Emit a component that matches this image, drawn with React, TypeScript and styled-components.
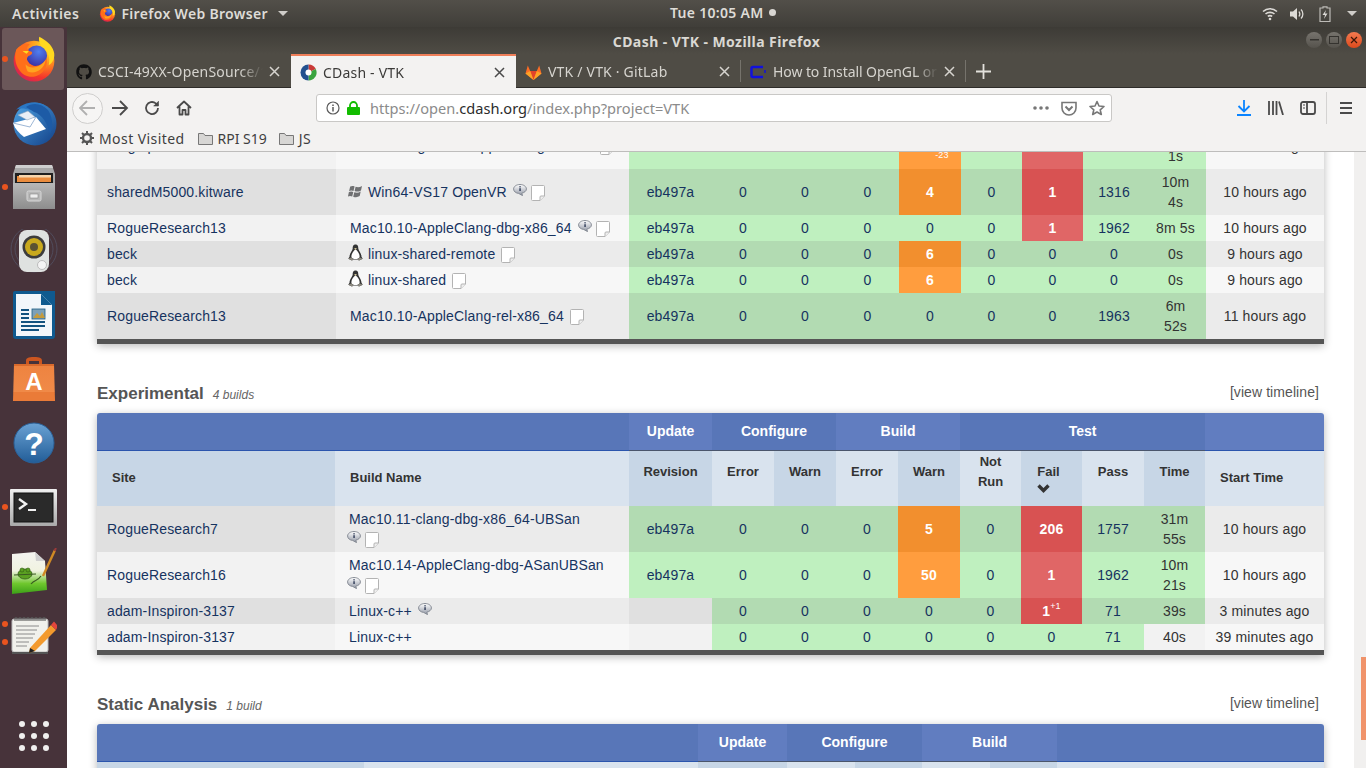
import React from "react";
import styled, { createGlobalStyle } from "styled-components";
import { FaGithub } from "react-icons/fa";

const Global = createGlobalStyle`
  html, body { margin: 0; padding: 0; background: #fff; overflow: hidden; }
  #root { width: 1366px; height: 768px; }
`;

const UI = `"Noto Sans", "Open Sans", sans-serif`;
const WEB = `"Liberation Sans", Arial, sans-serif`;

const Root = styled.div`
  width: 1366px; height: 768px; overflow: hidden; display: flex; flex-direction: column;
  font-family: ${UI};
`;

/* ---------- top panel ---------- */
const Panel = styled.header`
  height: 27px; flex: none; display: flex; align-items: center; position: relative;
  background: linear-gradient(#524f49, #403e39);
  color: #dedcd7; font-size: 14px; font-weight: 600; padding: 0 4px 0 12px; box-sizing: border-box;
`;
const PanelItem = styled.span`
  display: inline-flex; align-items: center; white-space: nowrap; letter-spacing: 0.5px;
`;
const AppMenu = styled(PanelItem)`
  margin-left: 20px; gap: 5px; letter-spacing: 0.32px;
`;
const Caret = styled.i`
  display: inline-block; width: 0; height: 0; margin-left: 5px;
  border-left: 5px solid transparent; border-right: 5px solid transparent; border-top: 5px solid #cfcdc9;
`;
const Clock = styled(PanelItem)`
  position: absolute; left: 670px; top: 3px; gap: 5px; letter-spacing: 0.3px;
`;
const RecDot = styled.i`
  width: 7px; height: 7px; border-radius: 50%; background: #d8d6d2;
`;
const Status = styled.div`
  margin-left: auto; display: flex; align-items: center; gap: 11px; padding-right: 5px;
`;

/* ---------- layout ---------- */
const Body = styled.div`
  flex: 1; display: flex; min-height: 0;
`;
const Dock = styled.nav`
  width: 67px; flex: none; background: #47333a; display: flex; flex-direction: column;
`;
const DockItem = styled.div<{ $active?: boolean }>`
  height: 64px; flex: none; display: flex; align-items: center; justify-content: center; position: relative;
  ${p => p.$active ? `
    &::before { content: ""; position: absolute; left: 2px; right: 3px; top: 1px; bottom: 1px;
      background: #6b5759; border-radius: 3px; }
  ` : ""}
  & > svg { position: relative; }
`;
const DockBottom = styled(DockItem)`
  margin-top: auto;
`;
const Pip = styled.i<{ $top: number }>`
  position: absolute; left: 2px; top: ${p => p.$top}px; width: 6px; height: 6px; border-radius: 50%; background: #e9541f;
`;
const Main = styled.div`
  flex: 1; min-width: 0; display: flex; flex-direction: column;
`;
const TitleBar = styled.div`
  height: 27px; flex: none; display: flex; align-items: center; justify-content: center; position: relative;
  background: linear-gradient(#3d3b36, #4f4c45); padding-top: 1px;
  color: #dad8d3; font-size: 14px; font-weight: 700; letter-spacing: 0.42px; box-sizing: border-box;
`;
const WinButtons = styled.div`
  position: absolute; right: 4px; top: 5px; display: flex; gap: 4px;
`;
const WinButton = styled.span<{ $close?: boolean }>`
  width: 16px; height: 16px; border-radius: 50%; display: flex; align-items: center; justify-content: center;
  background: ${p => p.$close ? "linear-gradient(#f47a50,#dc4a1c)" : "linear-gradient(#77746e,#55524c)"};
`;
const Tabs = styled.div`
  height: 33px; flex: none; display: flex; background: #4f4c45; border-bottom: 1px solid #2e2c29; box-sizing: content-box;
`;
const Tab = styled.div<{ $active?: boolean; $w: number; $sep?: boolean }>`
  width: ${p => p.$w}px; flex: none; box-sizing: border-box; display: flex; align-items: center; gap: 6px;
  padding: 2px 9px 0 9px; font-size: 14px; position: relative; letter-spacing: 0.2px;
  color: ${p => p.$active ? "#3b3a38" : "#d6d4cf"};
  ${p => p.$active ? `background: #f3f2f1; border-top: 2px solid #ef7f5a; margin-bottom: -1px; padding-top: 0; padding-bottom: 0;` : ""}
  ${p => p.$sep ? `&::after { content: ""; position: absolute; right: 0; top: 6px; bottom: 5px; width: 1px; background: #76736c; }` : ""}
`;
const TabLabel = styled.span<{ $track?: number }>`
  flex: 1; min-width: 0; white-space: nowrap; overflow: hidden;
  letter-spacing: ${p => p.$track ?? 0.2}px;
  -webkit-mask-image: linear-gradient(to right, #000 86%, transparent);
  mask-image: linear-gradient(to right, #000 86%, transparent);
`;
const Plus = styled.div`
  width: 34px; display: flex; align-items: center; justify-content: center; padding-top: 2px;
`;
const Toolbar = styled.div`
  height: 37px; flex: none; background: #f3f2f1; display: flex; align-items: center; position: relative;
  padding: 3px 0 0 5px; box-sizing: border-box;
`;
const BackButton = styled.span`
  width: 31px; height: 31px; box-sizing: border-box; border: 1px solid #cfcecd; border-radius: 50%; margin-right: 1px;
  display: flex; align-items: center; justify-content: center; background: #f6f5f4;
`;
const ToolIcon = styled.span<{ $w?: number }>`
  width: ${p => p.$w ?? 32}px; display: flex; align-items: center; justify-content: center; flex: none;
`;
const UrlBar = styled.div`
  width: 796px; height: 28px; box-sizing: border-box; margin: 0 116px; flex: none;
  background: #fff; border: 1px solid #c9c8c6; border-radius: 3px; display: flex; align-items: center; padding: 0 6px 0 9px;
`;
const UrlText = styled.span`
  color: #8b8b8b; font-size: 14.6px; margin-left: 10px; white-space: nowrap; flex: 1;
  & b { color: #2c2c2c; font-weight: 400; }
`;
const ToolSep = styled.i`
  width: 1px; height: 32px; background: #d4d3d2; margin: 0 3px 0 2px;
`;
const Bookmarks = styled.div`
  height: 26px; flex: none; background: #f3f2f1; border-bottom: 1px solid #bebdbc; box-sizing: content-box;
  display: flex; align-items: center; padding-left: 13px; color: #3f3f3f; font-size: 14px;
`;
const Bookmark = styled.span<{ $gap?: number; $track?: number }>`
  display: inline-flex; align-items: center; gap: 5px; margin-right: ${p => p.$gap ?? 0}px; white-space: nowrap;
  letter-spacing: ${p => p.$track ?? 0}px;
`;

/* ---------- page ---------- */
const Page = styled.main`
  flex: 1; min-height: 0; display: flex; background: #fff; overflow: hidden; font-family: ${WEB}; font-size: 14px;
`;
const Content = styled.div`
  width: 1287px; flex: none; box-sizing: border-box; padding: 0 30px;
`;
const Track = styled.div`
  width: 12px; flex: none; background: #f1f0ef;
`;
const Thumb = styled.div`
  width: 5px; height: 83px; margin: 505px 0 0 7px; background: #f0936a;
`;
const SectionHead = styled.div`
  height: 24px; margin: 37px 0 8px; display: flex; align-items: center; color: #555;
`;
const SectionTitle = styled.span`
  font-size: 17px; font-weight: 700; color: #555; position: relative; top: 1px;
`;
const Count = styled.em`
  font-size: 12px; color: #666; margin-left: 9px; position: relative; top: 2px;
`;
const Timeline = styled.span`
  margin-left: auto; margin-right: 5px; color: #555; position: relative; top: -1px; letter-spacing: 0.08px;
`;
const TableWrap = styled.div<{ $clip?: boolean }>`
  width: 1227px; box-shadow: 0 2px 9px rgba(0,0,0,.28);
  border-radius: 3px 3px 0 0; overflow: hidden;
  ${p => p.$clip ? `margin-top: -29px;` : ""}
`;
const Table = styled.table`
  width: 1227px; table-layout: fixed; border-collapse: collapse; border-bottom: 5px solid #555;
`;
const Col = styled.col<{ $w: number }>`
  width: ${p => p.$w}px;
`;
const TopTh = styled.th<{ $light?: boolean; $group?: boolean }>`
  height: 37px; padding: 0; box-sizing: border-box; color: #fff; font-size: 14px; font-weight: 700;
  background: ${p => p.$light ? "#617dc0" : "#5876b8"};
  border-bottom: 1px solid ${p => p.$group ? "#4b566c" : "#2b55ad"};
`;
const SubTh = styled.th<{ $light?: boolean; $left?: boolean; $raised?: boolean }>`
  height: 56px; box-sizing: border-box; color: #333; font-size: 13px; font-weight: 700; line-height: 20px;
  background: ${p => p.$light ? "#d9e3ee" : "#c7d6e6"};
  text-align: ${p => p.$left ? "left" : "center"};
  padding: ${p => p.$raised ? "0 4px 13px" : p.$left ? "0 0 0 15px" : "0 4px"};
`;
const SortHead = styled.span`
  display: inline-block; text-align: left; margin-right: 6px;
`;
const Chevron = styled.svg`
  display: block;
`;
const Row = styled.tr`
  height: 26px;
`;
const Td = styled.td<{ $bg: string; $hot?: boolean; $plain?: boolean }>`
  background: ${p => p.$bg}; padding: 3px 10px; box-sizing: border-box; line-height: 20px; text-align: center;
  letter-spacing: 0.15px;
  color: ${p => p.$hot ? "#fff" : p.$plain ? "#333" : "#16335f"};
  font-weight: ${p => p.$hot ? 700 : 400};
`;
const SiteTd = styled(Td)`
  text-align: left; white-space: nowrap; overflow: hidden;
`;
const BuildTd = styled(Td)`
  text-align: left; padding-left: 14px; padding-right: 4px; white-space: nowrap; overflow: hidden;
`;
const Delta = styled.sup`
  font-size: 9px; line-height: 0; font-weight: 400; position: relative; vertical-align: 0; top: -7px;
`;
const DeltaDown = styled(Delta)`
  top: 7px; margin-left: 0;
`;
const OsIcon = styled.svg`
  margin: 0 5px 0 -2px; vertical-align: -2px;
`;
const NoteIcon = styled.svg<{ $first?: boolean }>`
  margin-left: ${p => p.$first ? -2 : 6}px; margin-right: -2px; vertical-align: 1px;
`;
const DocIcon = styled.svg`
  margin-left: 6px; vertical-align: -4px;
`;

/* ---------- small drawings ---------- */
const Note = ({ first }: { first?: boolean }) => (
  <NoteIcon $first={first} width="14" height="12" viewBox="0 0 14 12">
    <defs><linearGradient id="nt" x1="0" y1="0" x2="0" y2="1"><stop offset="0" stopColor="#fff"/><stop offset="1" stopColor="#8f95a3"/></linearGradient></defs>
    <path d="M7 .5C3.4.5.6 2.5.6 5S3 9.2 5.6 9.4L9.5 11.6 8.8 9.2C11.4 8.6 13.4 7 13.4 5 13.4 2.5 10.6.5 7 .5Z" fill="url(#nt)" stroke="#7d828c" strokeWidth=".9"/>
    <rect x="6.4" y="2.200" width="1.300" height="1.200" fill="#1f2c4a"/><rect x="6.4" y="4.200" width="1.300" height="2.800" fill="#1f2c4a"/>
  </NoteIcon>
);
const Doc = () => (
  <DocIcon width="14" height="16" viewBox="0 0 14 16">
    <path d="M1.500.5H12.500A1 1 0 0 1 13.500 1.500V11L9 15.500H1.500A1 1 0 0 1 .5 14.500V1.500A1 1 0 0 1 1.500.5Z" fill="#fff" stroke="#b3b3b3"/>
    <path d="M13.500 11H10A1 1 0 0 0 9 12V15.500" fill="#eee" stroke="#b3b3b3"/>
  </DocIcon>
);
const Penguin = () => (
  <OsIcon width="15" height="17" viewBox="0 0 15 17">
    <path d="M7.500.5C5 .5 4.700 2.800 4.700 4.400 4.700 6.200 1.500 9 1.500 12.800L.3 14.800 4 16.500 5.300 15.600H9.700L11 16.500 14.700 14.800 13.500 12.800C13.500 9 10.300 6.200 10.300 4.400 10.300 2.800 10 .5 7.500.5Z" fill="#333"/>
    <path d="M7.500 5.600C5.400 6.800 3.200 10 3.400 12.800 3.600 14.800 5.700 15 7.500 15S11.400 14.800 11.600 12.800C11.800 10 9.600 6.800 7.500 5.600Z" fill="#fff"/>
    <path d="M6 4.800 7.500 4 9 4.800 7.500 5.800Z" fill="#e3d7a6"/>
    <path d="M.3 14.800 3.500 13.300 5.300 15.600 4 16.500ZM14.700 14.800 11.500 13.300 9.700 15.600 11 16.500Z" fill="#8d8a80"/>
  </OsIcon>
);
const WinFlag = () => (
  <OsIcon width="15" height="14" viewBox="0 0 15 14">
    <g fill="#6f7072">
      <path d="M2.200 1.600C3.800.7 5 .8 6.600 1.400L5.500 5.900C4 5.300 2.700 5.200 1.100 6Z"/>
      <path d="M7.600 1.700C9.600 2.500 11.600 2.400 14 .9L13 5.400C10.800 6.800 8.600 6.900 6.600 6.100Z"/>
      <path d="M.9 7C2.400 6.200 3.800 6.200 5.300 6.900L4.200 11.500C2.700 10.900 1.300 10.800-.1 11.600Z"/>
      <path d="M6.300 7.200C8.400 8 10.600 7.900 12.700 6.500L11.700 11.100C9.600 12.500 7.400 12.500 5.200 11.700Z"/>
    </g>
  </OsIcon>
);

const FirefoxGrad = () => (
  <defs>
    <radialGradient id="ffo" cx=".8" cy=".15" r="1.050"><stop offset="0" stopColor="#ffe226"/><stop offset=".35" stopColor="#ff9a1f"/><stop offset=".72" stopColor="#f5352b"/><stop offset="1" stopColor="#c81f62"/></radialGradient>
    <radialGradient id="ffp" cx=".6" cy=".3" r=".8"><stop offset="0" stopColor="#4f7ff0"/><stop offset="1" stopColor="#3a2a9c"/></radialGradient>
  </defs>
);
const Firefox = ({ size }: { size: number }) => (
  <svg width={size} height={size} viewBox="0 0 44 44">
    <FirefoxGrad/>
    <circle cx="22" cy="24" r="19.500" fill="url(#ffo)"/>
    <circle cx="24.500" cy="19" r="10" fill="url(#ffp)"/>
    <path d="M27 .8C26 5 28 9 31 11 35 14 38 21 36 28 40 26 42.500 20 41 15 39 8 33 4 27 .8Z" fill="#ffd91f"/>
    <path d="M5 13C8 9 13 7 18 8 14 11 15 13 18 14.500 22 15 20 18 17 19 14 21 15 26 20 28 25 30 31 27 34 21 36 31 28 40 18 39 9 38 1 26 5 13Z" fill="#ff6f1a"/>
    <path d="M14 27C18 32 28 31 33 23 32 32 23 37 16 34 15 32 14 30 14 27Z" fill="#ffa41f"/>
    <path d="M11 14C13 15 15 14 17 14.500L15 17C14 16 12 15.500 11 14Z" fill="#ffd91f"/>
  </svg>
);
const Thunderbird = () => (
  <svg width="48" height="46" viewBox="0 0 48 46">
    <defs><linearGradient id="tb" x1="0" y1="0" x2="1" y2="1"><stop offset="0" stopColor="#4fa6e6"/><stop offset="1" stopColor="#123f86"/></linearGradient></defs>
    <circle cx="25" cy="24" r="21.500" fill="url(#tb)"/>
    <path d="M6 10C14 1 30 0 38 8 30 5 24 6 20 10 14 8 10 8 6 10Z" fill="#2a77c4"/>
    <path d="M16 7C22 2 32 3 38 10 42 16 44 26 40 34 38 24 32 14 24 12Z" fill="#1d5ba6"/>
    <path d="M3 23 26 17 36 29 14 37C9 33 5 29 3 23Z" fill="#fff"/>
    <path d="M3 23 20 27 26 17" fill="none" stroke="#9db7d6"/>
    <path d="M8 15 18 11 25 17 17 20Z" fill="#e8eef6" stroke="#93a7bf" strokeWidth=".6"/>
  </svg>
);
const Cabinet = () => (
  <svg width="42" height="44" viewBox="0 0 42 44">
    <defs><linearGradient id="cb" x1="0" y1="0" x2="0" y2="1"><stop offset="0" stopColor="#b8b8b8"/><stop offset="1" stopColor="#8d8d8d"/></linearGradient></defs>
    <path d="M3 0H39L42 9V44H0V9Z" fill="#a9a9a9"/>
    <path d="M3 0H39L40 3H2Z" fill="#cfcfcf"/>
    <rect x="2" y="8" width="38" height="11" fill="#1f1f1f"/>
    <rect x="4" y="11" width="34" height="6" fill="#ea8c3e"/>
    <rect x="6" y="10" width="32" height="2.500" fill="#f7d5ac"/>
    <rect x="0" y="18" width="42" height="26" fill="url(#cb)"/>
    <rect x="14" y="26" width="14" height="10" rx="1.500" fill="#b8b8b8" stroke="#d8d8d8"/>
    <rect x="17" y="29" width="8" height="4" fill="#eee" stroke="#777" strokeWidth=".5"/>
  </svg>
);
const Speaker = () => (
  <svg width="50" height="44" viewBox="0 0 50 44">
    <g fill="none" stroke="#5d6b86" opacity=".45">
      <circle cx="25" cy="20" r="19"/><circle cx="25" cy="20" r="23"/>
    </g>
    <rect x="10" y="1" width="30" height="42" rx="8" fill="#dfe2e0"/>
    <circle cx="25" cy="18" r="11.500" fill="#3c3c3c"/>
    <circle cx="25" cy="18" r="9" fill="#c8a91d"/>
    <circle cx="25" cy="18" r="4" fill="#5a5232"/>
    <circle cx="33" cy="36" r="4.500" fill="#f4f4f4" stroke="#bbb"/>
  </svg>
);
const Writer = () => (
  <svg width="42" height="48" viewBox="0 0 42 48">
    <path d="M2 0H42V45A3 3 0 0 1 39 48H3A3 3 0 0 1 0 45V2A2 2 0 0 1 2 0Z" fill="#0f5a8f"/>
    <path d="M3 3H28L39 14V45H3Z" fill="#f2f6fa"/>
    <path d="M28 3V14H39Z" fill="#0f5a8f"/>
    <path d="M8 19H16M8 23H16M8 27H16M8 31H32M8 35H32M8 39H26" stroke="#13527f" strokeWidth="2"/>
    <rect x="19" y="18" width="13" height="10" fill="#7da0b8" stroke="#1d5c84" strokeWidth=".8"/>
    <path d="M20 27 24 22 27 25 29 21 32 27Z" fill="#c59b3d"/>
  </svg>
);
const Store = () => (
  <svg width="42" height="44" viewBox="0 0 42 44">
    <defs><linearGradient id="st" x1="0" y1="0" x2="0" y2="1"><stop offset="0" stopColor="#ee8340"/><stop offset=".75" stopColor="#f08a48"/><stop offset=".76" stopColor="#ea7b38"/><stop offset="1" stopColor="#ea7b38"/></linearGradient></defs>
    <path d="M13 9V4C13 1 15 0 21 0S29 1 29 4V9H26V4H16V9Z" fill="#cc5620"/>
    <path d="M1 7H41L42 44H0Z" fill="url(#st)"/>
    <rect x="1" y="7" width="40" height="2" fill="#d96a2c"/>
    <text x="21" y="33" textAnchor="middle" fontFamily="Liberation Sans" fontWeight="700" fontSize="24" fill="#fff">A</text>
  </svg>
);
const Help = () => (
  <svg width="42" height="42" viewBox="0 0 42 42">
    <defs><linearGradient id="hp" x1="0" y1="0" x2="0" y2="1"><stop offset="0" stopColor="#6aa2d4"/><stop offset="1" stopColor="#225d98"/></linearGradient></defs>
    <circle cx="21" cy="21" r="20" fill="url(#hp)" stroke="#2a6198"/>
    <text x="21" y="33" textAnchor="middle" fontFamily="Liberation Sans" fontWeight="700" fontSize="32" fill="#fff">?</text>
  </svg>
);
const Terminal = () => (
  <svg width="47" height="37" viewBox="0 0 47 37">
    <defs><linearGradient id="tm" x1="0" y1="0" x2="0" y2="1"><stop offset="0" stopColor="#f0f0f0"/><stop offset="1" stopColor="#a9a9a9"/></linearGradient></defs>
    <rect width="47" height="37" rx="1" fill="url(#tm)"/>
    <rect x="4" y="4" width="39" height="29" fill="#2a2a2a" stroke="#111"/>
    <path d="M9 10 16 15 9 20" fill="none" stroke="#f2f2f2" strokeWidth="2.400"/>
    <path d="M18 21H26" stroke="#f2f2f2" strokeWidth="2"/>
  </svg>
);
const Leafpad = () => (
  <svg width="46" height="46" viewBox="0 0 46 46">
    <defs><linearGradient id="lf" x1="0" y1="0" x2="0" y2="1"><stop offset="0" stopColor="#f4f4f0"/><stop offset=".45" stopColor="#f0f2e0"/><stop offset=".75" stopColor="#6fc72e"/><stop offset="1" stopColor="#3ba017"/></linearGradient></defs>
    <path d="M1 6 24 4 34 13 36 42 1 46Z" fill="url(#lf)"/>
    <path d="M24 4 25 13 34 13Z" fill="#cfcfcf"/>
    <ellipse cx="14" cy="26" rx="7" ry="5" fill="#5aa021" stroke="#2f5a12" strokeWidth=".8"/>
    <circle cx="11" cy="22" r="2" fill="#5aa021" stroke="#2f5a12" strokeWidth=".6"/><circle cx="17" cy="22" r="2" fill="#5aa021" stroke="#2f5a12" strokeWidth=".6"/>
    <path d="M3 27 25 26M20 36C24 31 26 34 30 28" stroke="#3a5a22" strokeWidth="1.200" fill="none"/>
    <path d="M32 28 44 2" stroke="#d08a24" strokeWidth="2.400"/>
    <path d="M43.500 3 45 0" stroke="#9a3a3a" strokeWidth="2"/>
  </svg>
);
const Notepad = () => (
  <svg width="46" height="38" viewBox="0 0 46 38">
    <rect x="1" y="3" width="36" height="33" rx="2" fill="#f1f1ec" stroke="#bbb"/>
    <rect x="1" y="36" width="36" height="2" fill="#555"/>
    <g fill="none" stroke="#555" strokeWidth="1.100">
      {[4,8,12,16,20,24,28,32].map(x => <path key={x} d={`M${x} 5V2A1.200 1.200 0 0 1 ${x+2} 2V5`}/>)}
    </g>
    <path d="M5 10H28M5 14H26M5 18H24M5 22H22M5 26H18M5 30H16" stroke="#8a8a8a" strokeWidth="1"/>
    <path d="M19 32 40 9 45 14 24 35 18 37Z" fill="#f39a2d"/>
    <path d="M18 37 19 32 24 35Z" fill="#222"/>
    <path d="M40 9 43 5.500 47 10 45 14Z" fill="#e3463c"/>
  </svg>
);
const Dots = () => (
  <svg width="30" height="30" viewBox="0 0 30 30" fill="#f0efee">
    {[3,15,27].flatMap(y => [3,15,27].map(x => <circle key={`${x}-${y}`} cx={x} cy={y} r="3"/>))}
  </svg>
);
const X = ({ c }: { c: string }) => (
  <svg width="11" height="11" viewBox="0 0 11 11" style={{ flex: "none", marginRight: 2 }}>
    <path d="M1 1 10 10M10 1 1 10" stroke={c} strokeWidth="1.500"/>
  </svg>
);
const Stroke = styled.svg`
  display: block; fill: none; stroke: #4a4a4a; stroke-width: 1.800;
`;

/* ---------- table data ---------- */
type R = {
  site: string; os?: "win" | "lin"; name: string; note?: boolean; doc?: boolean; wrap?: boolean;
  rev?: string; ce: number; cw: number; be: number; bw: number; bwd?: string; nr: number;
  f: number; fd?: string; pass: number | string; time: string; grayTime?: boolean; start: string;
};
const vtkCols = [239,293,83,62,62,63,62,61,61,62,61,118];
const expCols = [238,294,83,62,62,62,62,61,61,62,61,119];
const statCols = [267,334,89,68,67,68,67,267];

const nightly: R[] = [
  { site: "dragmp.kitware", name: "Mac10.10-gcc-111-AppleClang-rel-x86", doc: true, rev: "", ce: 0, cw: 0, be: 0, bw: 123, bwd: "-23", nr: 0, f: 3, pass: "", time: "10m 1s", start: "10 hours ago" },
  { site: "sharedM5000.kitware", os: "win", name: "Win64-VS17 OpenVR", note: true, doc: true, rev: "eb497a", ce: 0, cw: 0, be: 0, bw: 4, nr: 0, f: 1, pass: 1316, time: "10m 4s", start: "10 hours ago" },
  { site: "RogueResearch13", name: "Mac10.10-AppleClang-dbg-x86_64", note: true, doc: true, rev: "eb497a", ce: 0, cw: 0, be: 0, bw: 0, nr: 0, f: 1, pass: 1962, time: "8m 5s", start: "10 hours ago" },
  { site: "beck", os: "lin", name: "linux-shared-remote", doc: true, rev: "eb497a", ce: 0, cw: 0, be: 0, bw: 6, nr: 0, f: 0, pass: 0, time: "0s", start: "9 hours ago" },
  { site: "beck", os: "lin", name: "linux-shared", doc: true, rev: "eb497a", ce: 0, cw: 0, be: 0, bw: 6, nr: 0, f: 0, pass: 0, time: "0s", start: "9 hours ago" },
  { site: "RogueResearch13", name: "Mac10.10-AppleClang-rel-x86_64", doc: true, rev: "eb497a", ce: 0, cw: 0, be: 0, bw: 0, nr: 0, f: 0, pass: 1963, time: "6m 52s", start: "11 hours ago" },
];
const experimental: R[] = [
  { site: "RogueResearch7", name: "Mac10.11-clang-dbg-x86_64-UBSan", note: true, doc: true, wrap: true, rev: "eb497a", ce: 0, cw: 0, be: 0, bw: 5, nr: 0, f: 206, pass: 1757, time: "31m 55s", start: "10 hours ago" },
  { site: "RogueResearch16", name: "Mac10.14-AppleClang-dbg-ASanUBSan", note: true, doc: true, wrap: true, rev: "eb497a", ce: 0, cw: 0, be: 0, bw: 50, nr: 0, f: 1, pass: 1962, time: "10m 21s", start: "10 hours ago" },
  { site: "adam-Inspiron-3137", name: "Linux-c++", note: true, ce: 0, cw: 0, be: 0, bw: 0, nr: 0, f: 1, fd: "+1", pass: 71, time: "39s", start: "3 minutes ago" },
  { site: "adam-Inspiron-3137", name: "Linux-c++", ce: 0, cw: 0, be: 0, bw: 0, nr: 0, f: 0, pass: 71, time: "40s", grayTime: true, start: "39 minutes ago" },
];

const shade = (dark: boolean, d: string, l: string) => (dark ? d : l);
const Build = ({ r, dark }: { r: R; dark: boolean }) => {
  const G = shade(dark, "#b2dbb2", "#bff0bf");
  const warnBg = r.bw > 0 ? shade(dark, "#f28f2e", "#ff9d3e") : G;
  const failBg = r.f > 0 ? shade(dark, "#d85252", "#e06666") : G;
  const C1 = shade(dark, "#e0e0e0", "#f2f2f2");
  const C2 = shade(dark, "#ebebeb", "#f7f7f7");
  return (
    <Row>
      <SiteTd $bg={C1}>{r.site}</SiteTd>
      <BuildTd $bg={C2}>
        {r.os === "win" && <WinFlag/>}
        {r.os === "lin" && <Penguin/>}
        {r.name}
        {r.wrap && <br/>}
        {r.note && <Note first={r.wrap}/>}
        {r.doc && <Doc/>}
      </BuildTd>
      <Td $bg={r.rev !== undefined ? G : C1}>{r.rev}</Td>
      <Td $bg={G}>{r.ce}</Td>
      <Td $bg={G}>{r.cw}</Td>
      <Td $bg={G}>{r.be}</Td>
      <Td $bg={warnBg} $hot={r.bw > 0}>{r.bw}{r.bwd && <DeltaDown>{r.bwd}</DeltaDown>}</Td>
      <Td $bg={G}>{r.nr}</Td>
      <Td $bg={failBg} $hot={r.f > 0}>{r.f}{r.fd && <Delta>{r.fd}</Delta>}</Td>
      <Td $bg={G}>{r.pass}</Td>
      <Td $bg={r.grayTime ? C1 : G} $plain>{r.time}</Td>
      <Td $bg={C2} $plain>{r.start}</Td>
    </Row>
  );
};
const SortMark = () => (
  <Chevron width="13" height="12" viewBox="0 0 13 12">
    <path d="M1.500 3.500 6.500 8.500 11.500 3.500" fill="none" stroke="#333" strokeWidth="3.400"/>
  </Chevron>
);
const FullHead = () => (
  <thead>
    <tr>
      <TopTh colSpan={2}/>
      <TopTh $light $group>Update</TopTh>
      <TopTh colSpan={2} $group>Configure</TopTh>
      <TopTh colSpan={2} $light $group>Build</TopTh>
      <TopTh colSpan={4} $group>Test</TopTh>
      <TopTh $light/>
    </tr>
    <tr>
      <SubTh $left>Site</SubTh>
      <SubTh $light $left>Build Name</SubTh>
      <SubTh $raised>Revision</SubTh>
      <SubTh $light $raised>Error</SubTh>
      <SubTh $raised>Warn</SubTh>
      <SubTh $light $raised>Error</SubTh>
      <SubTh $raised>Warn</SubTh>
      <SubTh $light $raised>Not<br/>Run</SubTh>
      <SubTh><SortHead>Fail<SortMark/></SortHead></SubTh>
      <SubTh $light $raised>Pass</SubTh>
      <SubTh $raised>Time</SubTh>
      <SubTh $light $left>Start Time</SubTh>
    </tr>
  </thead>
);

export default function App() {
  return (
    <Root>
      <Global/>
      <Panel>
        <PanelItem>Activities</PanelItem>
        <AppMenu><Firefox size={17}/>Firefox Web Browser<Caret/></AppMenu>
        <Clock>Tue 10:05 AM<RecDot/></Clock>
        <Status>
          <svg width="16" height="14" viewBox="0 0 16 14" fill="none" stroke="#dcdad6" strokeWidth="1.600">
            <path d="M1 4.500C5 .8 11 .8 15 4.500M3.500 7C6 4.800 10 4.800 12.500 7M5.800 9.400C7 8.500 9 8.500 10.200 9.400"/><circle cx="8" cy="12" r="1.300" fill="#dcdad6" stroke="none"/>
          </svg>
          <svg width="16" height="14" viewBox="0 0 16 14">
            <path d="M1 4.500H4L8 1V13L4 9.500H1Z" fill="#dcdad6"/><path d="M10 4.500C11 6 11 8 10 9.500M12 2.500C14.500 5 14.500 9 12 11.500" fill="none" stroke="#dcdad6" strokeWidth="1.300"/>
          </svg>
          <svg width="12" height="16" viewBox="0 0 12 16" style={{ marginLeft: 3 }}>
            <path d="M4 .8H8V2H11V15.500H1V2H4Z" fill="none" stroke="#bdbbb7" strokeWidth="1.200"/><path d="M7 4 3.500 9H6L5 13 8.500 7.500H6Z" fill="#dcdad6"/>
          </svg>
          <Caret/>
        </Status>
      </Panel>
      <Body>
        <Dock>
          <DockItem $active><Pip $top={29}/><Firefox size={46}/></DockItem>
          <DockItem><Thunderbird/></DockItem>
          <DockItem><Pip $top={29}/><Cabinet/></DockItem>
          <DockItem><Speaker/></DockItem>
          <DockItem><Writer/></DockItem>
          <DockItem><Store/></DockItem>
          <DockItem><Help/></DockItem>
          <DockItem><Pip $top={29}/><Terminal/></DockItem>
          <DockItem><Leafpad/></DockItem>
          <DockItem><Pip $top={18}/><Pip $top={36}/><Notepad/></DockItem>
          <DockBottom><Dots/></DockBottom>
        </Dock>
        <Main>
          <TitleBar>
            CDash - VTK - Mozilla Firefox
            <WinButtons>
              <WinButton><svg width="9" height="2"><rect width="9" height="1.500" fill="#35332f"/></svg></WinButton>
              <WinButton><svg width="10" height="9"><rect x=".5" y=".5" width="9" height="7" fill="none" stroke="#35332f"/></svg></WinButton>
              <WinButton $close><svg width="8" height="8" viewBox="0 0 8 8"><path d="M1 1 7 7M7 1 1 7" stroke="#3a1608" strokeWidth="1.200"/></svg></WinButton>
            </WinButtons>
          </TitleBar>
          <Tabs>
            <Tab $w={224}>
              <FaGithub size={16} color="#111" style={{ flex: "none" }}/>
              <TabLabel>CSCI-49XX-OpenSource/1</TabLabel>
              <X c="#d6d4cf"/>
            </Tab>
            <Tab $w={225} $active>
              <svg width="17" height="17" viewBox="0 0 17 17" style={{ flex: "none" }}>
                <path d="M8.500.5A8 8 0 0 1 15.800 5L8.500 8.500Z" fill="#c93a36"/>
                <path d="M15.800 5A8 8 0 0 1 8.500 16.500L8.500 8.500Z" fill="#3aa33f"/>
                <path d="M8.500 16.500A8 8 0 0 1 8.500.5V8.500Z" fill="#22508f"/>
                <circle cx="8.500" cy="8.500" r="3" fill="#fff"/>
              </svg>
              <TabLabel>CDash - VTK</TabLabel>
              <X c="#4a4a4a"/>
            </Tab>
            <Tab $w={225} $sep>
              <svg width="17" height="16" viewBox="0 0 17 16" style={{ flex: "none" }}>
                <path d="M8.500 16 .5 9.500 2.800 1.500 5.200 7H11.800L14.200 1.500 16.500 9.500Z" fill="#fc6d26"/>
                <path d="M8.500 16 5.200 7H11.800Z" fill="#e24329"/>
                <path d="M.5 9.500 5.200 7 8.500 16ZM16.500 9.500 11.800 7 8.500 16Z" fill="#fca326"/>
              </svg>
              <TabLabel>VTK / VTK · GitLab</TabLabel>
              <X c="#d6d4cf"/>
            </Tab>
            <Tab $w={225} $sep>
              <svg width="16" height="14" viewBox="0 0 16 14" style={{ flex: "none", marginRight: 1 }}>
                <path d="M13 2H3A1.500 1.500 0 0 0 1.500 3.500V10.500A1.500 1.500 0 0 0 3 12H13" fill="none" stroke="#1111dd" strokeWidth="2.400"/>
                <path d="M15 5V8" stroke="#1111dd" strokeWidth="1.500"/>
              </svg>
              <TabLabel $track={-0.08}>How to Install OpenGL or Do</TabLabel>
              <X c="#d6d4cf"/>
            </Tab>
            <Plus>
              <svg width="15" height="15" viewBox="0 0 15 15"><path d="M7.500 0V15M0 7.500H15" stroke="#e3e1dc" strokeWidth="1.800"/></svg>
            </Plus>
          </Tabs>
          <Toolbar>
            <BackButton>
              <svg width="17" height="16" viewBox="0 0 17 16" fill="none" stroke="#b0b0b0" strokeWidth="1.800"><path d="M1 8H16M8 1 1 8 8 15"/></svg>
            </BackButton>
            <ToolIcon>
              <Stroke width="17" height="16" viewBox="0 0 17 16"><path d="M0 8H15M8 1 15 8 8 15"/></Stroke>
            </ToolIcon>
            <ToolIcon>
              <Stroke width="16" height="16" viewBox="0 0 16 16"><path d="M14 8A6 6 0 1 1 11.800 3.400L14 5.500"/><path d="M14.500 1V6H9.500" fill="#4a4a4a" strokeWidth=".6"/></Stroke>
            </ToolIcon>
            <ToolIcon>
              <Stroke width="16" height="16" viewBox="0 0 16 16" strokeLinejoin="round"><path d="M1 8 8 1.500 15 8M3.500 6.500V14.500H6.500V10H9.500V14.500H12.500V6.500"/></Stroke>
            </ToolIcon>
            <UrlBar>
              <svg width="14" height="14" viewBox="0 0 14 14" style={{ flex: "none" }}><circle cx="7" cy="7" r="6" fill="none" stroke="#5a5a5a" strokeWidth="1.200"/><path d="M7 6V10.500M7 3.500V5" stroke="#5a5a5a" strokeWidth="1.500"/></svg>
              <svg width="13" height="14" viewBox="0 0 13 14" style={{ flex: "none", marginLeft: 7 }}><rect y="6" width="13" height="8" rx="1" fill="#12bc00"/><path d="M3 6V4.500A3.500 3.500 0 0 1 10 4.500V6" fill="none" stroke="#12bc00" strokeWidth="1.800"/></svg>
              <UrlText>https://open.<b>cdash.org</b>/index.php?project=VTK</UrlText>
              <svg width="16" height="4" viewBox="0 0 16 4" fill="#777" style={{ flex: "none", marginRight: 12 }}><circle cx="2" cy="2" r="1.800"/><circle cx="8" cy="2" r="1.800"/><circle cx="14" cy="2" r="1.800"/></svg>
              <svg width="16" height="15" viewBox="0 0 16 15" fill="none" stroke="#777" strokeWidth="1.600" style={{ flex: "none", marginRight: 12 }}><path d="M1 1.500H15V7A7 7 0 0 1 1 7Z"/><path d="M4.500 5.500 8 9 11.500 5.500" strokeWidth="2"/></svg>
              <svg width="16" height="16" viewBox="0 0 16 16" fill="none" stroke="#777" strokeWidth="1.600" style={{ flex: "none" }}><path d="M8 1.500 10 6 15 6.500 11.200 9.800 12.300 14.500 8 12 3.700 14.500 4.800 9.800 1 6.500 6 6Z" strokeLinejoin="round"/></svg>
            </UrlBar>
            <ToolIcon>
              <svg width="14" height="16" viewBox="0 0 14 16" fill="none" stroke="#0a84ff" strokeWidth="1.800"><path d="M7 0V11M1.500 6 7 11.500 12.500 6M0 15H14"/></svg>
            </ToolIcon>
            <ToolIcon>
              <Stroke width="16" height="14" viewBox="0 0 16 14"><path d="M1 0V14M5 0V14M8.500 0V14M11 .5 15 14"/></Stroke>
            </ToolIcon>
            <ToolIcon>
              <Stroke width="16" height="14" viewBox="0 0 16 14"><rect x="1" y="1" width="14" height="12" rx="2"/><path d="M7 1V13"/><path d="M3 4H5M3 7H5" strokeWidth="1"/></Stroke>
            </ToolIcon>
            <ToolSep/>
            <ToolIcon>
              <Stroke width="12" height="12" viewBox="0 0 12 12" style={{ strokeWidth: 2 }}><path d="M0 1H12M0 6H12M0 11H12"/></Stroke>
            </ToolIcon>
          </Toolbar>
          <Bookmarks>
            <Bookmark $gap={13} $track={0.42}>
              <svg width="14" height="14" viewBox="0 0 14 14"><circle cx="7" cy="7" r="4" fill="none" stroke="#555" strokeWidth="2.400"/><path d="M7 0V3M7 11V14M0 7H3M11 7H14M2 2 4 4M10 10 12 12M12 2 10 4M4 10 2 12" stroke="#555" strokeWidth="2"/></svg>
              Most Visited
            </Bookmark>
            <Bookmark $gap={12}>
              <svg width="15" height="13" viewBox="0 0 15 13" fill="#d7d6d4" stroke="#777"><path d="M.5 12.500V1.500H5.500L7 3.500H14.500V12.500Z"/></svg>
              RPI S19
            </Bookmark>
            <Bookmark $track={0.4}>
              <svg width="15" height="13" viewBox="0 0 15 13" fill="#d7d6d4" stroke="#777"><path d="M.5 12.500V1.500H5.500L7 3.500H14.500V12.500Z"/></svg>
              JS
            </Bookmark>
          </Bookmarks>
          <Page>
            <Content>
              <TableWrap $clip>
                <Table>
                  <colgroup>{vtkCols.map((w, i) => <Col key={i} $w={w}/>)}</colgroup>
                  <tbody>{nightly.map((r, i) => <Build key={i} r={r} dark={i % 2 === 1}/>)}</tbody>
                </Table>
              </TableWrap>
              <SectionHead>
                <SectionTitle>Experimental</SectionTitle><Count>4 builds</Count>
                <Timeline>[view timeline]</Timeline>
              </SectionHead>
              <TableWrap>
                <Table>
                  <colgroup>{expCols.map((w, i) => <Col key={i} $w={w}/>)}</colgroup>
                  <FullHead/>
                  <tbody>{experimental.map((r, i) => <Build key={i} r={r} dark={i % 2 === 0}/>)}</tbody>
                </Table>
              </TableWrap>
              <SectionHead>
                <SectionTitle>Static Analysis</SectionTitle><Count>1 build</Count>
                <Timeline>[view timeline]</Timeline>
              </SectionHead>
              <TableWrap>
                <Table>
                  <colgroup>{statCols.map((w, i) => <Col key={i} $w={w}/>)}</colgroup>
                  <thead>
                    <tr>
                      <TopTh colSpan={2}/>
                      <TopTh $light $group>Update</TopTh>
                      <TopTh colSpan={2} $group>Configure</TopTh>
                      <TopTh colSpan={2} $light $group>Build</TopTh>
                      <TopTh/>
                    </tr>
                    <tr>
                      <SubTh $left>Site</SubTh>
                      <SubTh $light $left>Build Name</SubTh>
                      <SubTh $raised>Revision</SubTh>
                      <SubTh $light $raised>Error</SubTh>
                      <SubTh $raised>Warn</SubTh>
                      <SubTh $light $raised>Error</SubTh>
                      <SubTh $raised>Warn</SubTh>
                      <SubTh $light $left>Start Time</SubTh>
                    </tr>
                  </thead>
                </Table>
              </TableWrap>
            </Content>
            <Track><Thumb/></Track>
          </Page>
        </Main>
      </Body>
    </Root>
  );
}
